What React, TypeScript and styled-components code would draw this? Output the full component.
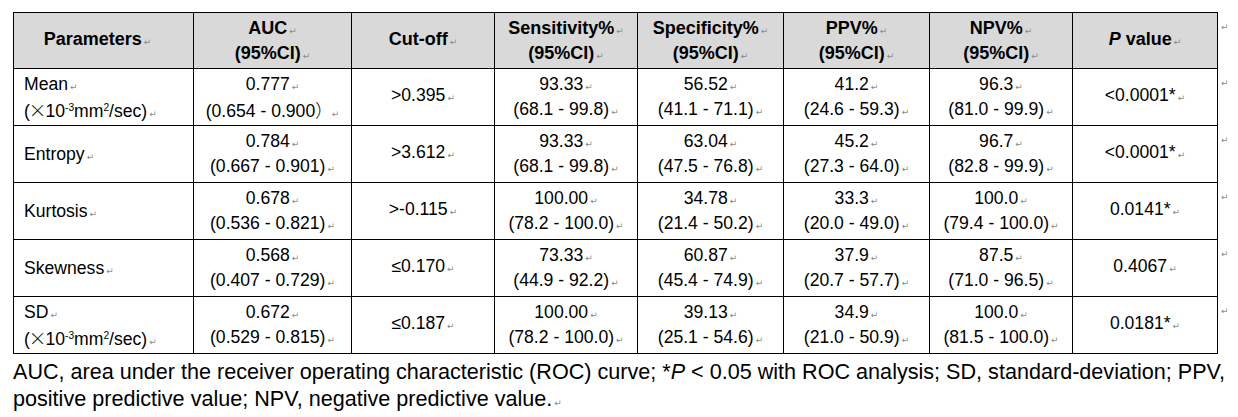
import React from "react";
import styled, { createGlobalStyle } from "styled-components";

const Global = createGlobalStyle`
  html, body { margin: 0; padding: 0; background: #fff; }
  body { font-family: "Liberation Sans", Arial, sans-serif; color: #000; }
`;

const Page = styled.div`
  padding: 12px 0 0 13px;
  width: 1238px;
  box-sizing: border-box;
`;

const Table = styled.table`
  border-collapse: collapse;
  table-layout: fixed;
  font-size: 17.6px;
  line-height: 25px;
`;

const HeadRow = styled.tr`
  height: 56px;
`;

const BodyRow = styled.tr`
  height: 57px;
`;

const HeadCell = styled.th<{ $w: number; $shift?: number }>`
  width: ${(p) => p.$w - (p.$shift ?? 0)}px;
  padding: 1px ${(p) => p.$shift ?? 0}px 0 0;
  border: 1px solid #000;
  background: #d9d9d9;
  font-weight: bold;
  font-size: 18px;
  text-align: center;
  vertical-align: middle;
  white-space: nowrap;
`;

const Cell = styled.td<{ $left?: boolean }>`
  padding: 0 ${(p) => (p.$left ? "0 0 10px" : "0")};
  border: 1px solid #000;
  text-align: ${(p) => (p.$left ? "left" : "center")};
  vertical-align: middle;
  white-space: nowrap;
`;

const MarkCell = styled.td`
  border: none;
  padding: 0 0 0 3px;
  vertical-align: top;
  line-height: 22px;
`;

const Line = styled.div`
  line-height: 25px;
  height: 25px;
`;

const Mark = styled.span<{ $gap?: number }>`
  font-family: "DejaVu Sans", sans-serif;
  font-size: 9px;
  color: #8a8a8a;
  margin-left: ${(p) => p.$gap ?? 2}px;
  font-weight: normal;
  font-style: normal;
`;

const Sup = styled.sup`
  font-size: 0.58em;
  line-height: 0;
  vertical-align: 0.55em;
`;

const Times = styled.span`
  font-family: "Noto Sans CJK SC", sans-serif;
  font-weight: 300;
  margin: 0 -1px;
`;

const Wide = styled.span`
  font-family: "Noto Sans CJK SC", sans-serif;
  font-weight: 300;
  margin-right: -3px;
`;

const Footnote = styled.p`
  margin: 4px 0 0 0;
  font-size: 21.6px;
  line-height: 27px;
  white-space: nowrap;
  color: #000;
`;

const Unit = () => (
  <>
    (<Times>×</Times>10<Sup>-3</Sup>mm<Sup>2</Sup>/sec)
  </>
);

type Row = {
  name: React.ReactNode[];
  auc: React.ReactNode[];
  cut: string;
  sens: string[];
  spec: string[];
  ppv: string[];
  npv: string[];
  p: string;
};

const rows: Row[] = [
  {
    name: ["Mean", <Unit key="u" />],
    auc: [
      "0.777",
      <React.Fragment key="a">
        (0.654 - 0.900<Wide>）</Wide>
      </React.Fragment>,
    ],
    cut: ">0.395",
    sens: ["93.33", "(68.1 - 99.8)"],
    spec: ["56.52", "(41.1 - 71.1)"],
    ppv: ["41.2", "(24.6 - 59.3)"],
    npv: ["96.3", "(81.0 - 99.9)"],
    p: "<0.0001*",
  },
  {
    name: ["Entropy"],
    auc: ["0.784", "(0.667 - 0.901)"],
    cut: ">3.612",
    sens: ["93.33", "(68.1 - 99.8)"],
    spec: ["63.04", "(47.5 - 76.8)"],
    ppv: ["45.2", "(27.3 - 64.0)"],
    npv: ["96.7", "(82.8 - 99.9)"],
    p: "<0.0001*",
  },
  {
    name: ["Kurtosis"],
    auc: ["0.678", "(0.536 - 0.821)"],
    cut: ">-0.115",
    sens: ["100.00", "(78.2 - 100.0)"],
    spec: ["34.78", "(21.4 - 50.2)"],
    ppv: ["33.3", "(20.0 - 49.0)"],
    npv: ["100.0", "(79.4 - 100.0)"],
    p: "0.0141*",
  },
  {
    name: ["Skewness"],
    auc: ["0.568", "(0.407 - 0.729)"],
    cut: "≤0.170",
    sens: ["73.33", "(44.9 - 92.2)"],
    spec: ["60.87", "(45.4 - 74.9)"],
    ppv: ["37.9", "(20.7 - 57.7)"],
    npv: ["87.5", "(71.0 - 96.5)"],
    p: "0.4067",
  },
  {
    name: ["SD", <Unit key="u" />],
    auc: ["0.672", "(0.529 - 0.815)"],
    cut: "≤0.187",
    sens: ["100.00", "(78.2 - 100.0)"],
    spec: ["39.13", "(25.1 - 54.6)"],
    ppv: ["34.9", "(21.0 - 50.9)"],
    npv: ["100.0", "(81.5 - 100.0)"],
    p: "0.0181*",
  },
];

const Lines = ({ items }: { items: React.ReactNode[] }) => (
  <>
    {items.map((it, i) => (
      <Line key={i}>
        {it}
        <Mark>↵</Mark>
      </Line>
    ))}
  </>
);

const widths = [179, 157, 142, 142, 145, 145, 142, 144];

export default function App() {
  return (
    <Page>
      <Global />
      <Table>
        <thead>
          <HeadRow>
            <HeadCell $w={widths[0]} $shift={12}>
              Parameters<Mark>↵</Mark>
            </HeadCell>
            <HeadCell $w={widths[1]}>
              <Lines items={["AUC", "(95%CI)"]} />
            </HeadCell>
            <HeadCell $w={widths[2]}>
              Cut-off<Mark>↵</Mark>
            </HeadCell>
            <HeadCell $w={widths[3]}>
              <Lines items={["Sensitivity%", "(95%CI)"]} />
            </HeadCell>
            <HeadCell $w={widths[4]}>
              <Lines items={["Specificity%", "(95%CI)"]} />
            </HeadCell>
            <HeadCell $w={widths[5]}>
              <Lines items={["PPV%", "(95%CI)"]} />
            </HeadCell>
            <HeadCell $w={widths[6]}>
              <Lines items={["NPV%", "(95%CI)"]} />
            </HeadCell>
            <HeadCell $w={widths[7]}>
              <i>P</i> value<Mark>↵</Mark>
            </HeadCell>
            <MarkCell>
              <Mark $gap={0}>↵</Mark>
            </MarkCell>
          </HeadRow>
        </thead>
        <tbody>
          {rows.map((r, i) => (
            <BodyRow key={i}>
              <Cell $left>
                <Lines items={r.name} />
              </Cell>
              <Cell>
                <Lines items={r.auc} />
              </Cell>
              <Cell>
                {r.cut}
                <Mark>↵</Mark>
              </Cell>
              <Cell>
                <Lines items={r.sens} />
              </Cell>
              <Cell>
                <Lines items={r.spec} />
              </Cell>
              <Cell>
                <Lines items={r.ppv} />
              </Cell>
              <Cell>
                <Lines items={r.npv} />
              </Cell>
              <Cell>
                {r.p}
                <Mark>↵</Mark>
              </Cell>
              <MarkCell>
                <Mark $gap={0}>↵</Mark>
              </MarkCell>
            </BodyRow>
          ))}
        </tbody>
      </Table>
      <Footnote>
        AUC, area under the receiver operating characteristic (ROC) curve; *<i>P</i> &lt; 0.05 with ROC
        analysis; SD, standard-deviation; PPV,
        <br />
        positive predictive value; NPV, negative predictive value.<Mark>↵</Mark>
      </Footnote>
    </Page>
  );
}
